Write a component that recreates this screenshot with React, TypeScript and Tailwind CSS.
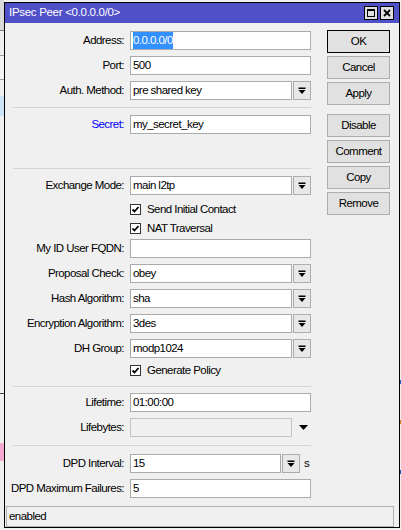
import React from "react";

const FONT = "font-['Liberation_Sans',Arial,sans-serif]";

function DropIcon() {
  return (
    <svg width="8" height="8" viewBox="0 0 8 8">
      <rect x="0.5" y="0.5" width="7" height="1.5" fill="#000" />
      <path d="M0.5 3 L7.5 3 L4 7 Z" fill="#000" />
    </svg>
  );
}

function DropBtn() {
  return (
    <div className="ml-[1px] flex h-[19px] w-[18px] items-center justify-center border border-[#adadad] bg-[#e8e8e8]">
      <DropIcon />
    </div>
  );
}

function Input({ w, children }: { w: string; children?: React.ReactNode }) {
  return (
    <div className={`flex h-[19px] items-center border border-[#ababab] bg-white pl-[2px] ${w}`}>
      {children}
    </div>
  );
}

function Row({
  label,
  blue,
  mt,
  children,
}: {
  label: string;
  blue?: boolean;
  mt: string;
  children: React.ReactNode;
}) {
  return (
    <div className={`flex h-[19px] items-center ${mt}`}>
      <div className={`w-[119px] whitespace-nowrap text-right ${blue ? "text-[#0000ff]" : "text-black"}`}>{label}</div>
      <div className="ml-[6px] flex items-center">{children}</div>
    </div>
  );
}

function Check({ label, mt }: { label: string; mt: string }) {
  return (
    <div className={`flex h-[19px] items-center ${mt}`}>
      <div className="ml-[125px] flex h-[11px] w-[11px] items-center justify-center border border-[#333] bg-white">
        <svg width="9" height="9" viewBox="0 0 9 9">
          <path d="M1.5 4.5 L3.5 6.5 L7.5 2" stroke="#000" strokeWidth="1.8" fill="none" />
        </svg>
      </div>
      <div className="ml-[6px]">{label}</div>
    </div>
  );
}

function Sep({ mt }: { mt: string }) {
  return <div className={`ml-[8px] h-px w-[298px] bg-[#d5d5d5] ${mt}`} />;
}

function Btn({ label, def, mt }: { label: string; def?: boolean; mt: string }) {
  return (
    <div
      className={`flex h-[23px] w-[63px] items-center justify-center border bg-[#e1e1e1] ${
        def ? "border-black" : "border-[#adadad]"
      } ${mt}`}
    >
      {label}
    </div>
  );
}

export default function App() {
  return (
    <div className={`relative h-[530px] w-[401px] overflow-hidden bg-[#f0f0f0] text-[11.5px] tracking-[-0.55px] text-black ${FONT}`}>
      {/* background fragments behind window */}
      <div className="absolute left-0 top-0 h-[30px] w-[4px] bg-[#d9d9d9]" />
      <div className="absolute left-0 top-[30px] h-px w-[4px] bg-[#808080]" />
      <div className="absolute left-0 top-[55px] h-[25px] w-[4px] border-y border-[#a0a0a0] bg-[#f5f5f5]" />
      <div className="absolute left-0 top-[96px] h-[20px] w-[4px] bg-[#cce4f7]" />
      <div className="absolute left-0 top-[393px] h-px w-[4px] bg-[#404040]" />
      <div className="absolute left-0 top-[443px] h-[18px] w-[4px] bg-[#f7a8d0]" />
      <div className="absolute left-[400px] top-[380px] h-[4px] w-[1px] bg-[#2060c0]" />
      <div className="absolute left-[400px] top-[420px] h-[4px] w-[1px] bg-[#d08020]" />
      <div className="absolute left-[400px] top-[470px] h-[4px] w-[1px] bg-[#2060c0]" />

      {/* window */}
      <div className="absolute left-[4px] top-[2px] flex w-[396px] flex-col border border-black bg-[#f0f0f0]">
        {/* title bar */}
        <div className="flex h-[20px] items-center justify-between bg-[#5050c8] pl-[4px] pr-[5px]">
          <span className="tracking-[-0.3px] text-white">IPsec Peer &lt;0.0.0.0/0&gt;</span>
          <div className="flex items-center gap-[2px]">
            <div className="flex h-[14px] w-[14px] items-center justify-center border border-black bg-[#e0e0e0]">
              <div className="h-[8px] w-[8px] border border-black border-t-2" />
            </div>
            <div className="flex h-[14px] w-[14px] items-center justify-center border border-black bg-[#e0e0e0]">
              <svg width="8" height="8" viewBox="0 0 8 8">
                <path d="M1 1 L7 7 M7 1 L1 7" stroke="#000" strokeWidth="1.8" />
              </svg>
            </div>
          </div>
        </div>

        {/* body */}
        <div className="flex items-start">
          {/* form */}
          <div className="flex w-[306px] flex-col pt-[8px]">
            <Row label="Address:" mt="mt-0">
              <Input w="w-[181px]">
                <span className="bg-[#3390ff] text-white">0.0.0.0/0</span>
              </Input>
            </Row>
            <Row label="Port:" mt="mt-[6px]">
              <Input w="w-[181px]">500</Input>
            </Row>
            <Row label="Auth. Method:" mt="mt-[6px]">
              <Input w="w-[162px]">pre shared key</Input>
              <DropBtn />
            </Row>
            <Sep mt="mt-[7px]" />
            <Row label="Secret:" blue mt="mt-[7px]">
              <Input w="w-[181px]">my_secret_key</Input>
            </Row>
            <Sep mt="mt-[34px]" />
            <Row label="Exchange Mode:" mt="mt-[7px]">
              <Input w="w-[162px]">main l2tp</Input>
              <DropBtn />
            </Row>
            <Check label="Send Initial Contact" mt="mt-[5px]" />
            <Check label="NAT Traversal" mt="mt-0" />
            <Row label="My ID User FQDN:" mt="mt-[1px]">
              <Input w="w-[181px]" />
            </Row>
            <Row label="Proposal Check:" mt="mt-[6px]">
              <Input w="w-[162px]">obey</Input>
              <DropBtn />
            </Row>
            <Row label="Hash Algorithm:" mt="mt-[6px]">
              <Input w="w-[162px]">sha</Input>
              <DropBtn />
            </Row>
            <Row label="Encryption Algorithm:" mt="mt-[6px]">
              <Input w="w-[162px]">3des</Input>
              <DropBtn />
            </Row>
            <Row label="DH Group:" mt="mt-[6px]">
              <Input w="w-[162px]">modp1024</Input>
              <DropBtn />
            </Row>
            <Check label="Generate Policy" mt="mt-[3px]" />
            <Sep mt="mt-[6px]" />
            <Row label="Lifetime:" mt="mt-[6px]">
              <Input w="w-[181px]">01:00:00</Input>
            </Row>
            <Row label="Lifebytes:" mt="mt-[6px]">
              <div className="h-[19px] w-[162px] border border-[#c4c4c4] bg-[#f0f0f0]" />
              <svg className="ml-[7px]" width="9" height="6" viewBox="0 0 9 6">
                <path d="M0 0 L9 0 L4.5 5 Z" fill="#000" />
              </svg>
            </Row>
            <Sep mt="mt-[8px]" />
            <Row label="DPD Interval:" mt="mt-[8px]">
              <Input w="w-[151px]">15</Input>
              <div className="ml-[1px] flex h-[19px] w-[18px] items-center justify-center border border-[#adadad] bg-[#e8e8e8]">
                <DropIcon />
              </div>
              <span className="ml-[4px]">s</span>
            </Row>
            <Row label="DPD Maximum Failures:" mt="mt-[6px]">
              <Input w="w-[181px]">5</Input>
            </Row>
          </div>

          {/* buttons */}
          <div className="ml-[16px] flex flex-col pt-[7px]">
            <Btn label="OK" def mt="mt-0" />
            <Btn label="Cancel" mt="mt-[3px]" />
            <Btn label="Apply" mt="mt-[3px]" />
            <Btn label="Disable" mt="mt-[9px]" />
            <Btn label="Comment" mt="mt-[3px]" />
            <Btn label="Copy" mt="mt-[3px]" />
            <Btn label="Remove" mt="mt-[3px]" />
          </div>
        </div>

        {/* status bar */}
        <div className="ml-[1px] mt-[8px] flex h-[21px] w-[388px] items-center border border-[#b0b0b0] pl-[2px]">
          enabled
        </div>
      </div>
    </div>
  );
}
